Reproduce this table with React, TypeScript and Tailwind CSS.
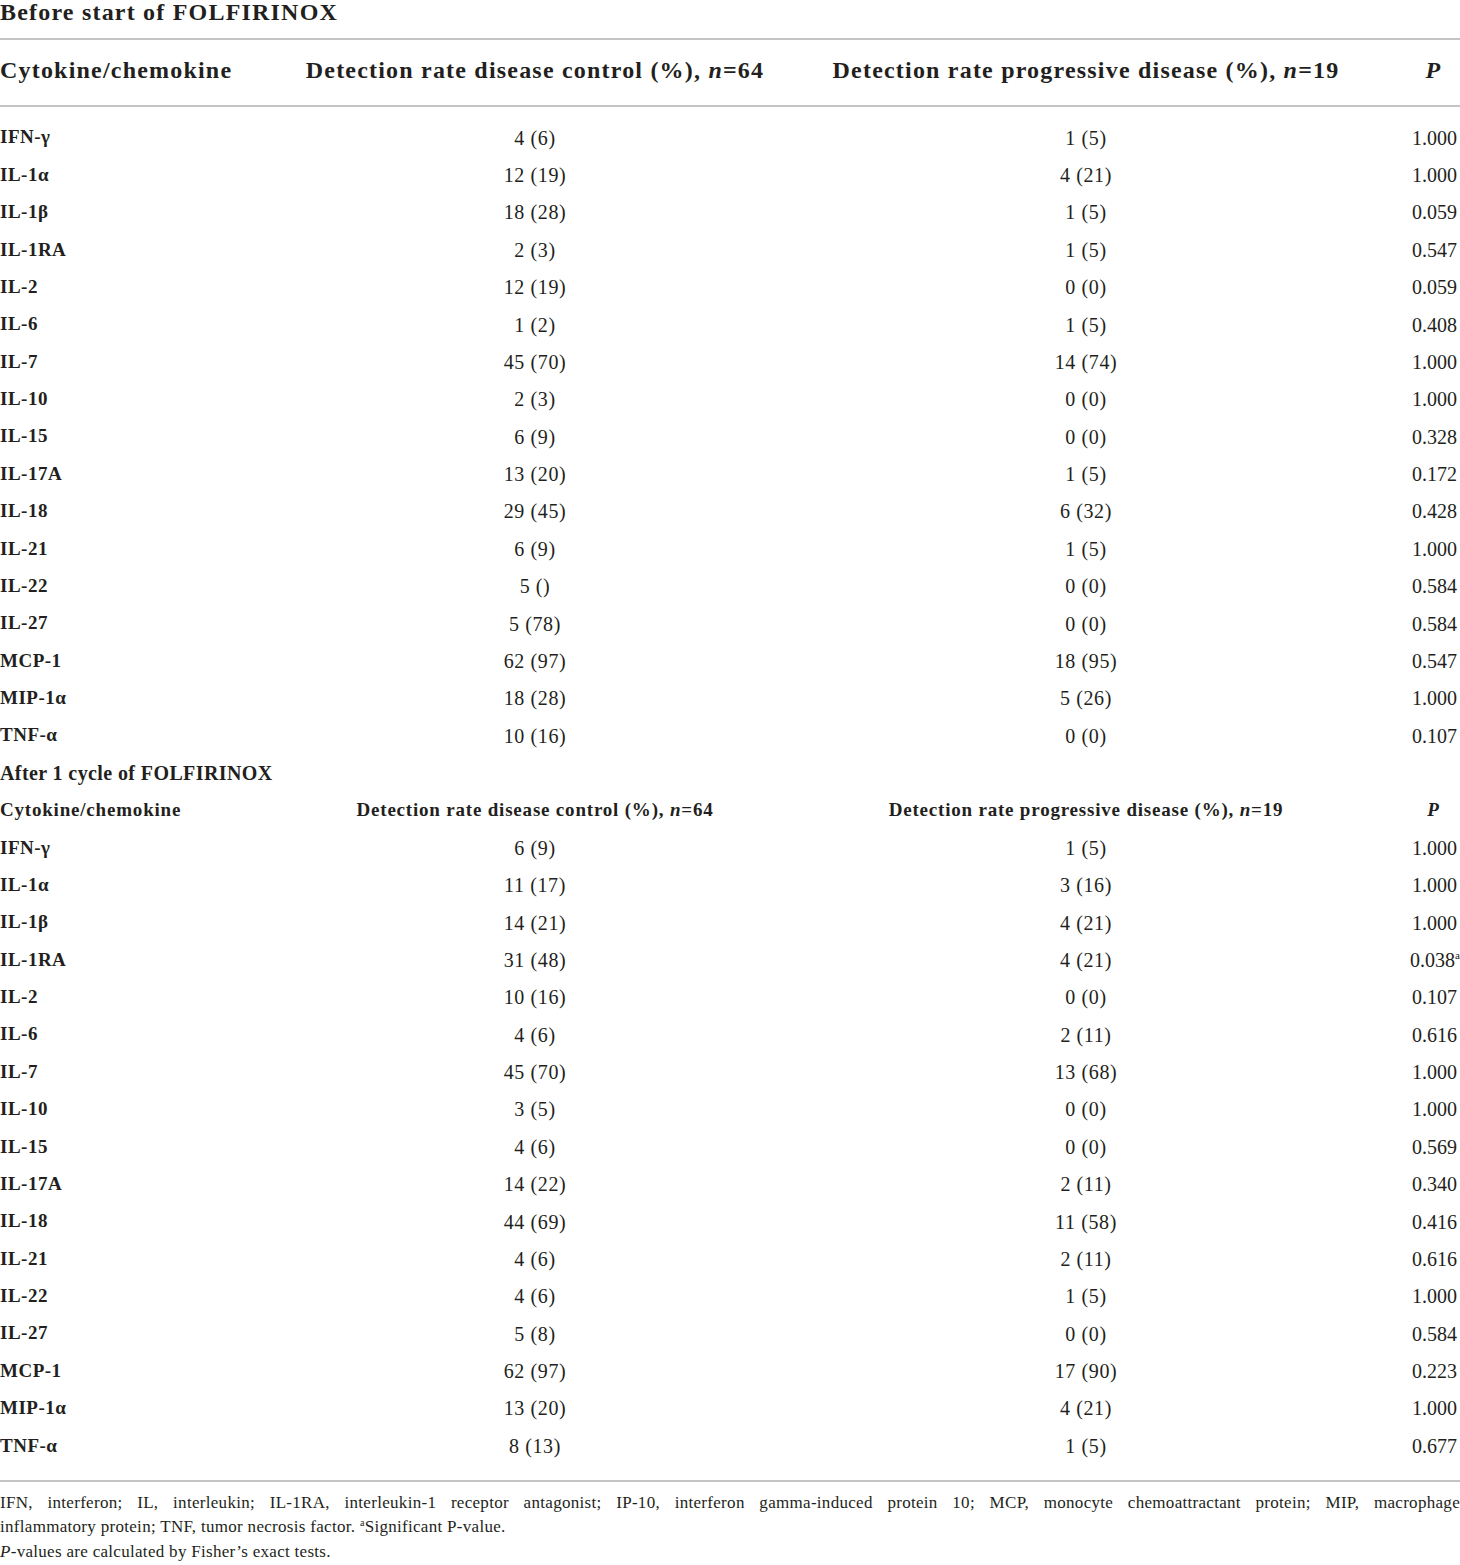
type Row = [string, string, string, string];

const before: Row[] = [
  ["IFN-γ", "4 (6)", "1 (5)", "1.000"],
  ["IL-1α", "12 (19)", "4 (21)", "1.000"],
  ["IL-1β", "18 (28)", "1 (5)", "0.059"],
  ["IL-1RA", "2 (3)", "1 (5)", "0.547"],
  ["IL-2", "12 (19)", "0 (0)", "0.059"],
  ["IL-6", "1 (2)", "1 (5)", "0.408"],
  ["IL-7", "45 (70)", "14 (74)", "1.000"],
  ["IL-10", "2 (3)", "0 (0)", "1.000"],
  ["IL-15", "6 (9)", "0 (0)", "0.328"],
  ["IL-17A", "13 (20)", "1 (5)", "0.172"],
  ["IL-18", "29 (45)", "6 (32)", "0.428"],
  ["IL-21", "6 (9)", "1 (5)", "1.000"],
  ["IL-22", "5 ()", "0 (0)", "0.584"],
  ["IL-27", "5 (78)", "0 (0)", "0.584"],
  ["MCP-1", "62 (97)", "18 (95)", "0.547"],
  ["MIP-1α", "18 (28)", "5 (26)", "1.000"],
  ["TNF-α", "10 (16)", "0 (0)", "0.107"],
];

const after: Row[] = [
  ["IFN-γ", "6 (9)", "1 (5)", "1.000"],
  ["IL-1α", "11 (17)", "3 (16)", "1.000"],
  ["IL-1β", "14 (21)", "4 (21)", "1.000"],
  ["IL-1RA", "31 (48)", "4 (21)", "0.038"],
  ["IL-2", "10 (16)", "0 (0)", "0.107"],
  ["IL-6", "4 (6)", "2 (11)", "0.616"],
  ["IL-7", "45 (70)", "13 (68)", "1.000"],
  ["IL-10", "3 (5)", "0 (0)", "1.000"],
  ["IL-15", "4 (6)", "0 (0)", "0.569"],
  ["IL-17A", "14 (22)", "2 (11)", "0.340"],
  ["IL-18", "44 (69)", "11 (58)", "0.416"],
  ["IL-21", "4 (6)", "2 (11)", "0.616"],
  ["IL-22", "4 (6)", "1 (5)", "1.000"],
  ["IL-27", "5 (8)", "0 (0)", "0.584"],
  ["MCP-1", "62 (97)", "17 (90)", "0.223"],
  ["MIP-1α", "13 (20)", "4 (21)", "1.000"],
  ["TNF-α", "8 (13)", "1 (5)", "0.677"],
];

const grid = "grid grid-cols-[305px_460px_642px_1fr] items-center";

function DataRow({ row, sig }: { row: Row; sig?: boolean }) {
  return (
    <div className={`${grid} h-[37.375px] text-[20px]`}>
      <div className="text-[19px] font-bold tracking-[0.5px]">{row[0]}</div>
      <div className="text-center tracking-[0.6px]">{row[1]}</div>
      <div className="text-center tracking-[0.6px]">{row[2]}</div>
      <div className={`text-right ${sig ? "pr-0" : "pr-[3px]"}`}>
        {row[3]}
        {sig && <span className="relative -top-[8px] text-[11px] leading-none">a</span>}
      </div>
    </div>
  );
}

export default function App() {
  return (
    <div
      className="w-[1460px] bg-white text-[#231f20]"
      style={{ fontFamily: '"Liberation Serif", serif' }}
    >
      <div className="h-[38px] text-[24px] font-bold leading-[24px] tracking-[1.2px]">
        Before start of FOLFIRINOX
      </div>
      <div className="border-t-2 border-[#c4c4c4]" />
      <div className={`${grid} h-[65px] pb-[5px] text-[24px] font-bold tracking-[1.2px]`}>
        <div>Cytokine/chemokine</div>
        <div className="text-center">
          Detection rate disease control (%), <i>n</i>=64
        </div>
        <div className="text-center">
          Detection rate progressive disease (%), <i>n</i>=19
        </div>
        <div className="text-center">
          <i>P</i>
        </div>
      </div>
      <div className="border-t-2 border-[#c4c4c4]" />
      <div className="pt-[12px]">
        {before.map((r) => (
          <DataRow key={"b" + r[0]} row={r} />
        ))}
        <div className="flex h-[37.375px] items-center text-[20px] font-bold tracking-[0.4px]">
          After 1 cycle of FOLFIRINOX
        </div>
        <div className={`${grid} h-[37.375px] text-[19px] font-bold tracking-[0.8px]`}>
          <div>Cytokine/chemokine</div>
          <div className="text-center">
            Detection rate disease control (%), <i>n</i>=64
          </div>
          <div className="text-center">
            Detection rate progressive disease (%), <i>n</i>=19
          </div>
          <div className="text-center">
            <i>P</i>
          </div>
        </div>
        {after.map((r) => (
          <DataRow key={"a" + r[0]} row={r} sig={r[0] === "IL-1RA"} />
        ))}
      </div>
      <div className="mt-[15px] border-t-2 border-[#c4c4c4]" />
      <div className="pt-[9px] text-[17px] leading-[24.5px] tracking-[0.3px]">
        <p className="text-justify [text-align-last:justify]">
          IFN, interferon; IL, interleukin; IL-1RA, interleukin-1 receptor antagonist; IP-10,
          interferon gamma-induced protein 10; MCP, monocyte chemoattractant protein; MIP,
          macrophage
        </p>
        <p>
          inflammatory protein; TNF, tumor necrosis factor.{" "}
          <span className="relative -top-[6px] text-[10px] leading-none">a</span>Significant
          P-value.
        </p>
        <p>
          <i>P</i>-values are calculated by Fisher’s exact tests.
        </p>
      </div>
    </div>
  );
}
